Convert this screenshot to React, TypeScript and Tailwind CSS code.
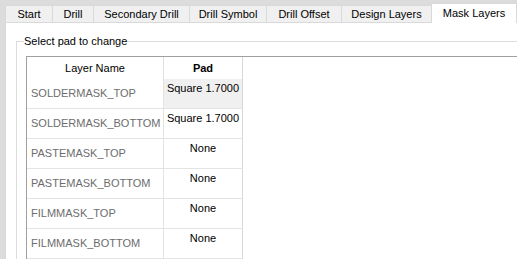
import { Fragment } from "react";

const tabs = [
  { label: "Start", width: "w-[47px]" },
  { label: "Drill", width: "w-[41px]" },
  { label: "Secondary Drill", width: "w-[96px]" },
  { label: "Drill Symbol", width: "w-[77px]" },
  { label: "Drill Offset", width: "w-[75px]" },
  { label: "Design Layers", width: "w-[90px]" },
];

const rows = [
  { layer: "SOLDERMASK_TOP", pad: "Square 1.7000", selected: true },
  { layer: "SOLDERMASK_BOTTOM", pad: "Square 1.7000" },
  { layer: "PASTEMASK_TOP", pad: "None" },
  { layer: "PASTEMASK_BOTTOM", pad: "None" },
  { layer: "FILMMASK_TOP", pad: "None" },
  { layer: "FILMMASK_BOTTOM", pad: "None" },
];

const App = () => {
  return (
    <div className="w-[517px] h-[259px] overflow-hidden bg-[#dcdcdc] pl-[5px] flex flex-col font-['Liberation_Sans',Arial,sans-serif] text-[11px] text-black">
      {/* tab strip */}
      <div className="flex items-end h-[22px] shrink-0">
        {tabs.map((tab) => (
          <div
            key={tab.label}
            className={`${tab.width} h-[17px] shrink-0 flex items-center justify-center bg-[#f0f0f0] border-l border-t border-[#d9d9d9] leading-none`}
          >
            {tab.label}
          </div>
        ))}
        <div className="w-[86px] h-[20px] -mb-px shrink-0 flex items-start justify-center pt-[4px] bg-white border-l border-t border-r border-[#d9d9d9] relative z-10 leading-none">
          Mask Layers
        </div>
      </div>

      {/* tab page */}
      <div className="flex-1 bg-white border-l border-t border-[#d9d9d9] pl-[10px]">
        <fieldset className="w-[600px] h-[300px] mt-[10px] border border-[#dcdcdc] pl-[7px] pr-0 pb-0">
          <legend className="px-0 leading-[16px]">Select pad to change</legend>
          <div className="ml-[2px] mt-[7px] border-l border-t border-[#a0a0a0]">
            <div className="grid grid-cols-[137px_79px]">
              <div className="h-[22px] flex items-center justify-center border-r border-[#e0e0e0]">Layer Name</div>
              <div className="h-[22px] flex items-center justify-center border-r border-[#d8d8d8] font-bold">Pad</div>
              {rows.map((row) => (
                <Fragment key={row.layer}>
                  <div className="h-[30px] flex items-center pl-[4px] border-r border-b border-[#e3e3e3] text-[#6d6d6d] whitespace-nowrap">
                    {row.layer}
                  </div>
                  <div
                    className={`h-[30px] flex justify-center pt-px leading-[16px] border-r border-b border-[#e3e3e3] border-r-[#d8d8d8] whitespace-nowrap ${
                      row.selected ? "bg-[#f0f0f0]" : "bg-white"
                    }`}
                  >
                    {row.pad}
                  </div>
                </Fragment>
              ))}
            </div>
          </div>
        </fieldset>
      </div>
    </div>
  );
};

export default App;
